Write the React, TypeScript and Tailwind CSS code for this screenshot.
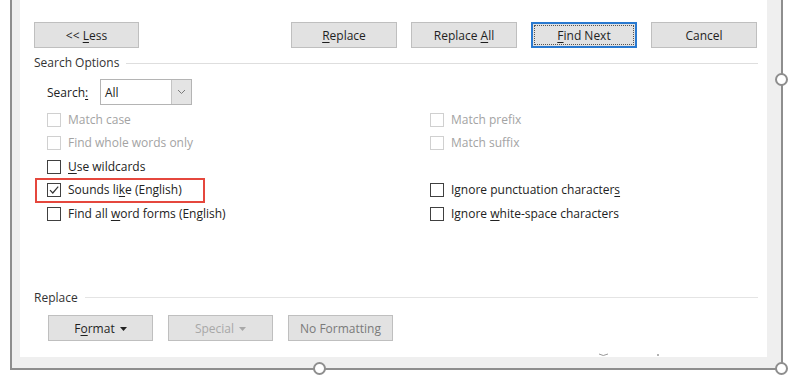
import type { ReactNode } from 'react'
import clsx from 'clsx'

// access-key underline, like the Win32 dialog
function Key({ children }: { children: ReactNode }) {
  return <span className="underline decoration-1 underline-offset-[2px]">{children}</span>
}

function Btn({ children, focused = false, disabled = false, dim = false, w = 'w-[106px]' }: {
  children: ReactNode
  focused?: boolean
  disabled?: boolean
  dim?: boolean
  w?: string
}) {
  return (
    <div
      className={clsx(
        'flex h-[26px] shrink-0 items-center justify-center bg-[#e2e2e2] pt-[2px]',
        w,
        focused ? 'border-2 border-[#2a7ad0]' : 'border border-[#bfbfbf]',
        disabled ? 'text-[#a8a8a8]' : dim ? 'text-[#7a7a7a]' : 'text-[#1f1f1f]',
      )}
    >
      {focused ? (
        <div className="m-[1px] mt-[-1px] flex h-[20px] w-full items-center justify-center border border-dotted border-[#555] pt-[1px]">
          <span className="whitespace-pre">{children}</span>
        </div>
      ) : (
        <span className="flex items-center whitespace-pre">{children}</span>
      )}
    </div>
  )
}

function Check({ label, checked = false, disabled = false }: {
  label: ReactNode
  checked?: boolean
  disabled?: boolean
}) {
  return (
    <div className="flex h-[23.5px] items-center gap-[7px]">
      <span
        className={clsx(
          'flex h-[14px] w-[14px] shrink-0 items-center justify-center border bg-white',
          disabled ? 'border-[#d0d0d0]' : 'border-[#404040]',
        )}
      >
        {checked && (
          <svg width="12" height="12" viewBox="0 0 12 12" fill="none">
            <path d="M2 6.2 L4.8 9 L10.2 2.6" stroke="#333" strokeWidth="1.2" />
          </svg>
        )}
      </span>
      <span className={clsx('whitespace-nowrap', disabled ? 'text-[#a3a3a3]' : 'text-[#222]')}>{label}</span>
    </div>
  )
}

function Handle({ className }: { className: string }) {
  return (
    <div
      className={clsx(
        'absolute h-[13px] w-[13px] rounded-full border-2 border-[#8e8e8e] bg-white',
        className,
      )}
    />
  )
}

export default function App() {
  return (
    <div className="relative h-[383px] w-[800px] overflow-hidden bg-white font-['Open_Sans',sans-serif] text-[12px] leading-[16px] text-[#222]">
      {/* picture frame in the document, with the dialog screenshot inside */}
      <div className="ml-[10px] h-[370px] w-[773px] border-x-2 border-b-2 border-[#8e8e8e] bg-[#efefef] pb-[11px] pl-[8px] pr-[14px]">
        <div className="relative h-full bg-white pt-[22px]">
          {/* top buttons */}
          <div className="flex pl-[14px] pr-[10px]">
            <Btn w="w-[105px]">
              {'<< '}
              <Key>L</Key>ess
            </Btn>
            <div className="flex-1" />
            <div className="flex gap-[14px]">
              <Btn>
                <Key>R</Key>eplace
              </Btn>
              <Btn>
                {'Replace '}
                <Key>A</Key>ll
              </Btn>
              <Btn focused>
                <Key>F</Key>ind Next
              </Btn>
              <Btn>Cancel</Btn>
            </div>
          </div>

          {/* Search Options */}
          <div className="mt-[7px] flex items-center pl-[14px] pr-[9px]">
            <span className="text-[#333]">Search Options</span>
            <div className="ml-[7px] h-px flex-1 bg-[#dedede]" />
          </div>

          <div className="mt-[8px] flex items-center pl-[27px]">
            <span className="w-[53px] pt-[1px]">
              Search<Key>:</Key>
            </span>
            <div className="flex h-[26px] w-[92px] border border-[#b4b4b4] bg-white">
              <span className="flex-1 pl-[4px] pt-[1px] leading-[24px]">All</span>
              <div className="flex w-[20px] items-center justify-center border-l border-[#c4c4c4] bg-[#e4e4e4]">
                <svg width="9" height="6" viewBox="0 0 9 6" fill="none">
                  <path d="M1 1 L4.5 4.5 L8 1" stroke="#7a7a7a" strokeWidth="1" />
                </svg>
              </div>
            </div>
          </div>

          <div className="mt-[3px] grid grid-cols-[383px_1fr] pl-[27px]">
            <div>
              <Check disabled label="Match case" />
              <Check disabled label="Find whole words only" />
              <Check
                label={
                  <>
                    <Key>U</Key>se wildcards
                  </>
                }
              />
              <div className="relative">
                <Check
                  checked
                  label={
                    <>
                      Sounds li<Key>k</Key>e (English)
                    </>
                  }
                />
                <div className="absolute left-[-12px] top-[-1px] h-[25px] w-[170px] border-[2.5px] border-[#e5473d]" />
              </div>
              <Check
                label={
                  <>
                    Find all <Key>w</Key>ord forms (English)
                  </>
                }
              />
            </div>
            <div>
              <Check disabled label="Match prefix" />
              <Check disabled label="Match suffix" />
              <div className="h-[23.5px]" />
              <Check
                label={
                  <>
                    Ignore punctuation character<Key>s</Key>
                  </>
                }
              />
              <Check
                label={
                  <>
                    Ignore <Key>w</Key>hite-space characters
                  </>
                }
              />
            </div>
          </div>

          {/* Replace */}
          <div className="mt-[64px] flex items-center pl-[14px] pr-[9px]">
            <span className="text-[#333]">Replace</span>
            <div className="ml-[7px] h-px flex-1 bg-[#e4e4e4]" />
          </div>
          <div className="mt-[9px] flex gap-[15px] pl-[28px]">
            <Btn w="w-[105px]">
              F<Key>o</Key>rmat
              <svg className="ml-[5px]" width="7" height="4" viewBox="0 0 7 4">
                <path d="M0 0 H7 L3.5 4 Z" fill="#222" />
              </svg>
            </Btn>
            <Btn w="w-[105px]" disabled>
              Special
              <svg className="ml-[5px]" width="7" height="4" viewBox="0 0 7 4">
                <path d="M0 0 H7 L3.5 4 Z" fill="#a8a8a8" />
              </svg>
            </Btn>
            <Btn w="w-[105px]" dim>
              No Formatting
            </Btn>
          </div>

          {/* faint marks at the bottom edge of the capture */}
          <svg className="absolute bottom-[-2px] left-[578px]" width="64" height="6" viewBox="0 0 64 6" fill="none">
            <path d="M1 1 Q5 4 10 1" stroke="#9a9a9a" strokeWidth="1" />
            <circle cx="60" cy="2" r="1" fill="#9a9a9a" />
          </svg>
        </div>
      </div>

      <Handle className="left-[775px] top-[73px]" />
      <Handle className="left-[775px] top-[362px]" />
      <Handle className="left-[313px] top-[362px]" />
    </div>
  )
}
